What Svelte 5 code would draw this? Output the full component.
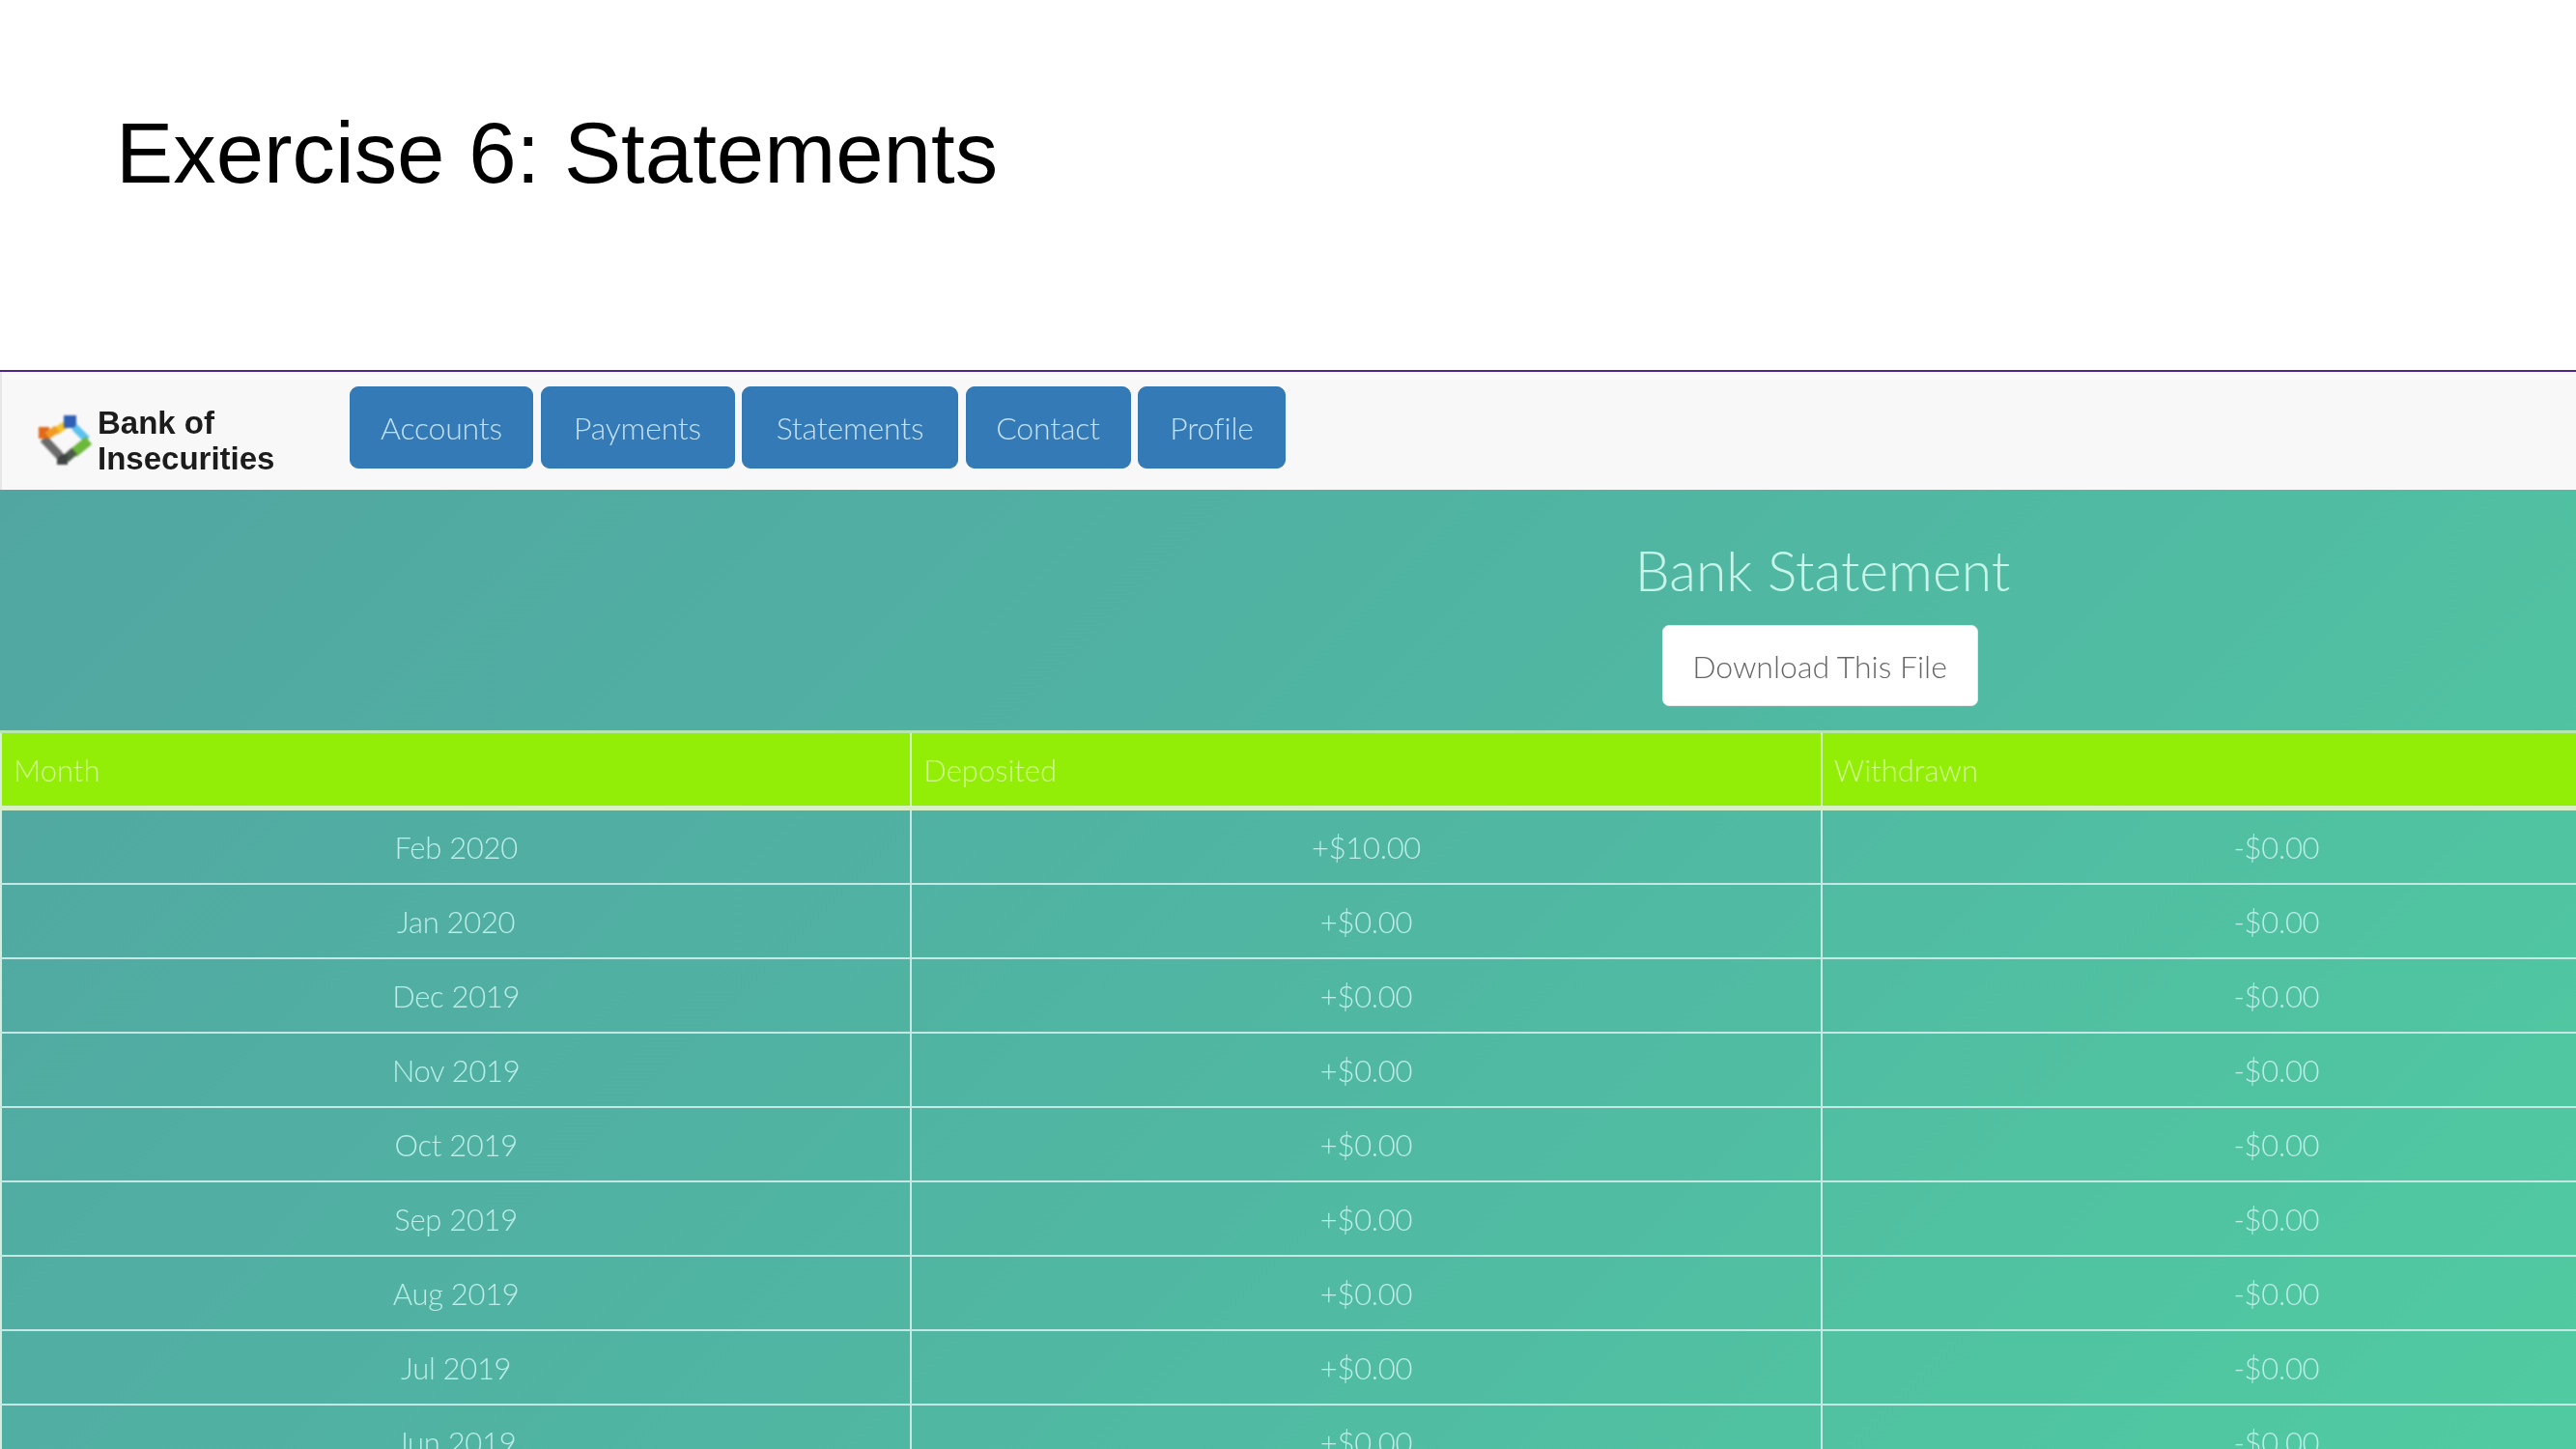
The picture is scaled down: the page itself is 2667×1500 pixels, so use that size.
<script>
  const nav = [
    { label: 'Accounts', width: 190 },
    { label: 'Payments', width: 201 },
    { label: 'Statements', width: 224 },
    { label: 'Contact', width: 171 },
    { label: 'Profile', width: 153 }
  ];
  const rows = [
    ['Feb 2020', '+$10.00', '-$0.00'],
    ['Jan 2020', '+$0.00', '-$0.00'],
    ['Dec 2019', '+$0.00', '-$0.00'],
    ['Nov 2019', '+$0.00', '-$0.00'],
    ['Oct 2019', '+$0.00', '-$0.00'],
    ['Sep 2019', '+$0.00', '-$0.00'],
    ['Aug 2019', '+$0.00', '-$0.00'],
    ['Jul 2019', '+$0.00', '-$0.00'],
    ['Jun 2019', '+$0.00', '-$0.00']
  ];
</script>

<div class="slide">
  <h1 class="title">Exercise 6: Statements</h1>
  <div class="app">
    <nav class="navbar">
      <div class="brand">
        <svg class="logo" viewBox="0 0 60 56" width="60" height="56">
          <path d="M20 18 L32 10" stroke="#f5c22c" stroke-width="8" fill="none"/>
          <rect x="29" y="1" width="13" height="13" fill="#2f5fb5"/>
          <path d="M40 13 L53 26" stroke="#5cc3ee" stroke-width="8" fill="none"/>
          <path d="M55 27 L39 40" stroke="#6cb83a" stroke-width="10" fill="none"/>
          <path d="M40 38 L31 46" stroke="#4d5a4a" stroke-width="9" fill="none"/>
          <rect x="22" y="41" width="11" height="11" fill="#3f4442"/>
          <path d="M8 25 L25 43" stroke="#6b6b6b" stroke-width="9" fill="none"/>
          <rect x="3" y="13" width="11" height="12" fill="#e06a1c"/>
          <path d="M12 22 L22 15" stroke="#f09a24" stroke-width="8" fill="none"/>
        </svg>
        <div class="brand-name">Bank of<br />Insecurities</div>
      </div>
      <div class="menu">
        {#each nav as item}
          <button class="nav-btn" style="width: {item.width}px">{item.label}</button>
        {/each}
      </div>
    </nav>
    <main class="content">
      <section class="head">
        <h2 class="heading">Bank Statement</h2>
        <button class="download">Download This File</button>
      </section>
      <table class="statement">
        <thead>
          <tr><th>Month</th><th>Deposited</th><th>Withdrawn</th></tr>
        </thead>
        <tbody>
          {#each rows as row}
            <tr>
              {#each row as cell}<td>{cell}</td>{/each}
            </tr>
          {/each}
        </tbody>
      </table>
    </main>
  </div>
</div>

<style>
  :global(body) {
    margin: 0;
    background: #fff;
    overflow: hidden;
  }
  .slide {
    width: 2667px;
    height: 1500px;
    overflow: hidden;
    display: flex;
    flex-direction: column;
  }
  .title {
    flex: none;
    margin: 0;
    height: 383px;
    box-sizing: border-box;
    padding: 103px 0 0 120px;
    font: 400 88.8px/111px "Liberation Sans", Arial, sans-serif;
    color: #000;
  }
  .app {
    flex: none;
    border-top: 2px solid #4b2590;
    font-family: "Lato", "Open Sans", sans-serif;
    font-weight: 300;
    filter: blur(0.5px);
  }
  .navbar {
    height: 122px;
    box-sizing: border-box;
    background: #f8f8f8;
    display: flex;
    align-items: flex-start;
    border-left: 2px solid #e7e7e7;
  }
  .brand {
    width: 360px;
    height: 122px;
    display: flex;
    align-items: center;
    padding: 20px 0 0 35px;
    box-sizing: border-box;
    gap: 4px;
  }
  .logo {
    flex: none;
    margin-top: 2px;
    filter: blur(0.8px);
  }
  .brand-name {
    font: 700 33px/37px "Liberation Sans", Arial, sans-serif;
    color: #1c1c1c;
    white-space: nowrap;
  }
  .menu {
    display: flex;
    gap: 7.5px;
    padding-top: 15px;
  }
  .nav-btn {
    height: 85px;
    padding: 0;
    background: #337ab7;
    border: 1px solid #3278b3;
    border-radius: 9px;
    color: #c4e0f3;
    font: inherit;
    font-size: 32px;
    letter-spacing: -0.2px;
  }
  .content {
    width: 2829px;
    height: 1000px;
    background: linear-gradient(135deg, #51a6a2 0%, #50b7a2 50%, #50cda1 100%);
    color: #bcede8;
  }
  .head {
    height: 249px;
    box-sizing: border-box;
    padding-top: 48px;
    display: flex;
    flex-direction: column;
    align-items: center;
    width: 3774px;
  }
  .heading {
    margin: 0 0 22px;
    font-size: 57px;
    line-height: 70px;
    font-weight: 300;
    color: #c8f5ea;
  }
  .download {
    width: 327px;
    height: 84px;
    margin-right: 6px;
    background: #fff;
    border: 1px solid #e8e8e8;
    border-radius: 7px;
    color: #666;
    font: inherit;
    font-size: 32px;
  }
  .statement {
    width: 2829px;
    table-layout: fixed;
    border-collapse: collapse;
    border-top: 3px solid #b5e5b0;
    border-left: 2px solid #d5ecdf;
  }
  th {
    height: 75px;
    background: #93ee07;
    color: #d0f88c;
    font-weight: 300;
    font-size: 31px;
    text-align: left;
    padding: 0 0 0 12px;
    border-right: 2px solid #d5f5c0;
    border-bottom: 5px solid #d8f0c8;
  }
  td {
    height: 75px;
    padding: 0;
    text-align: center;
    font-size: 31px;
    letter-spacing: -0.3px;
    border-right: 2px solid #c5e8e4;
    border-bottom: 2px solid #c5e8e4;
  }
</style>
